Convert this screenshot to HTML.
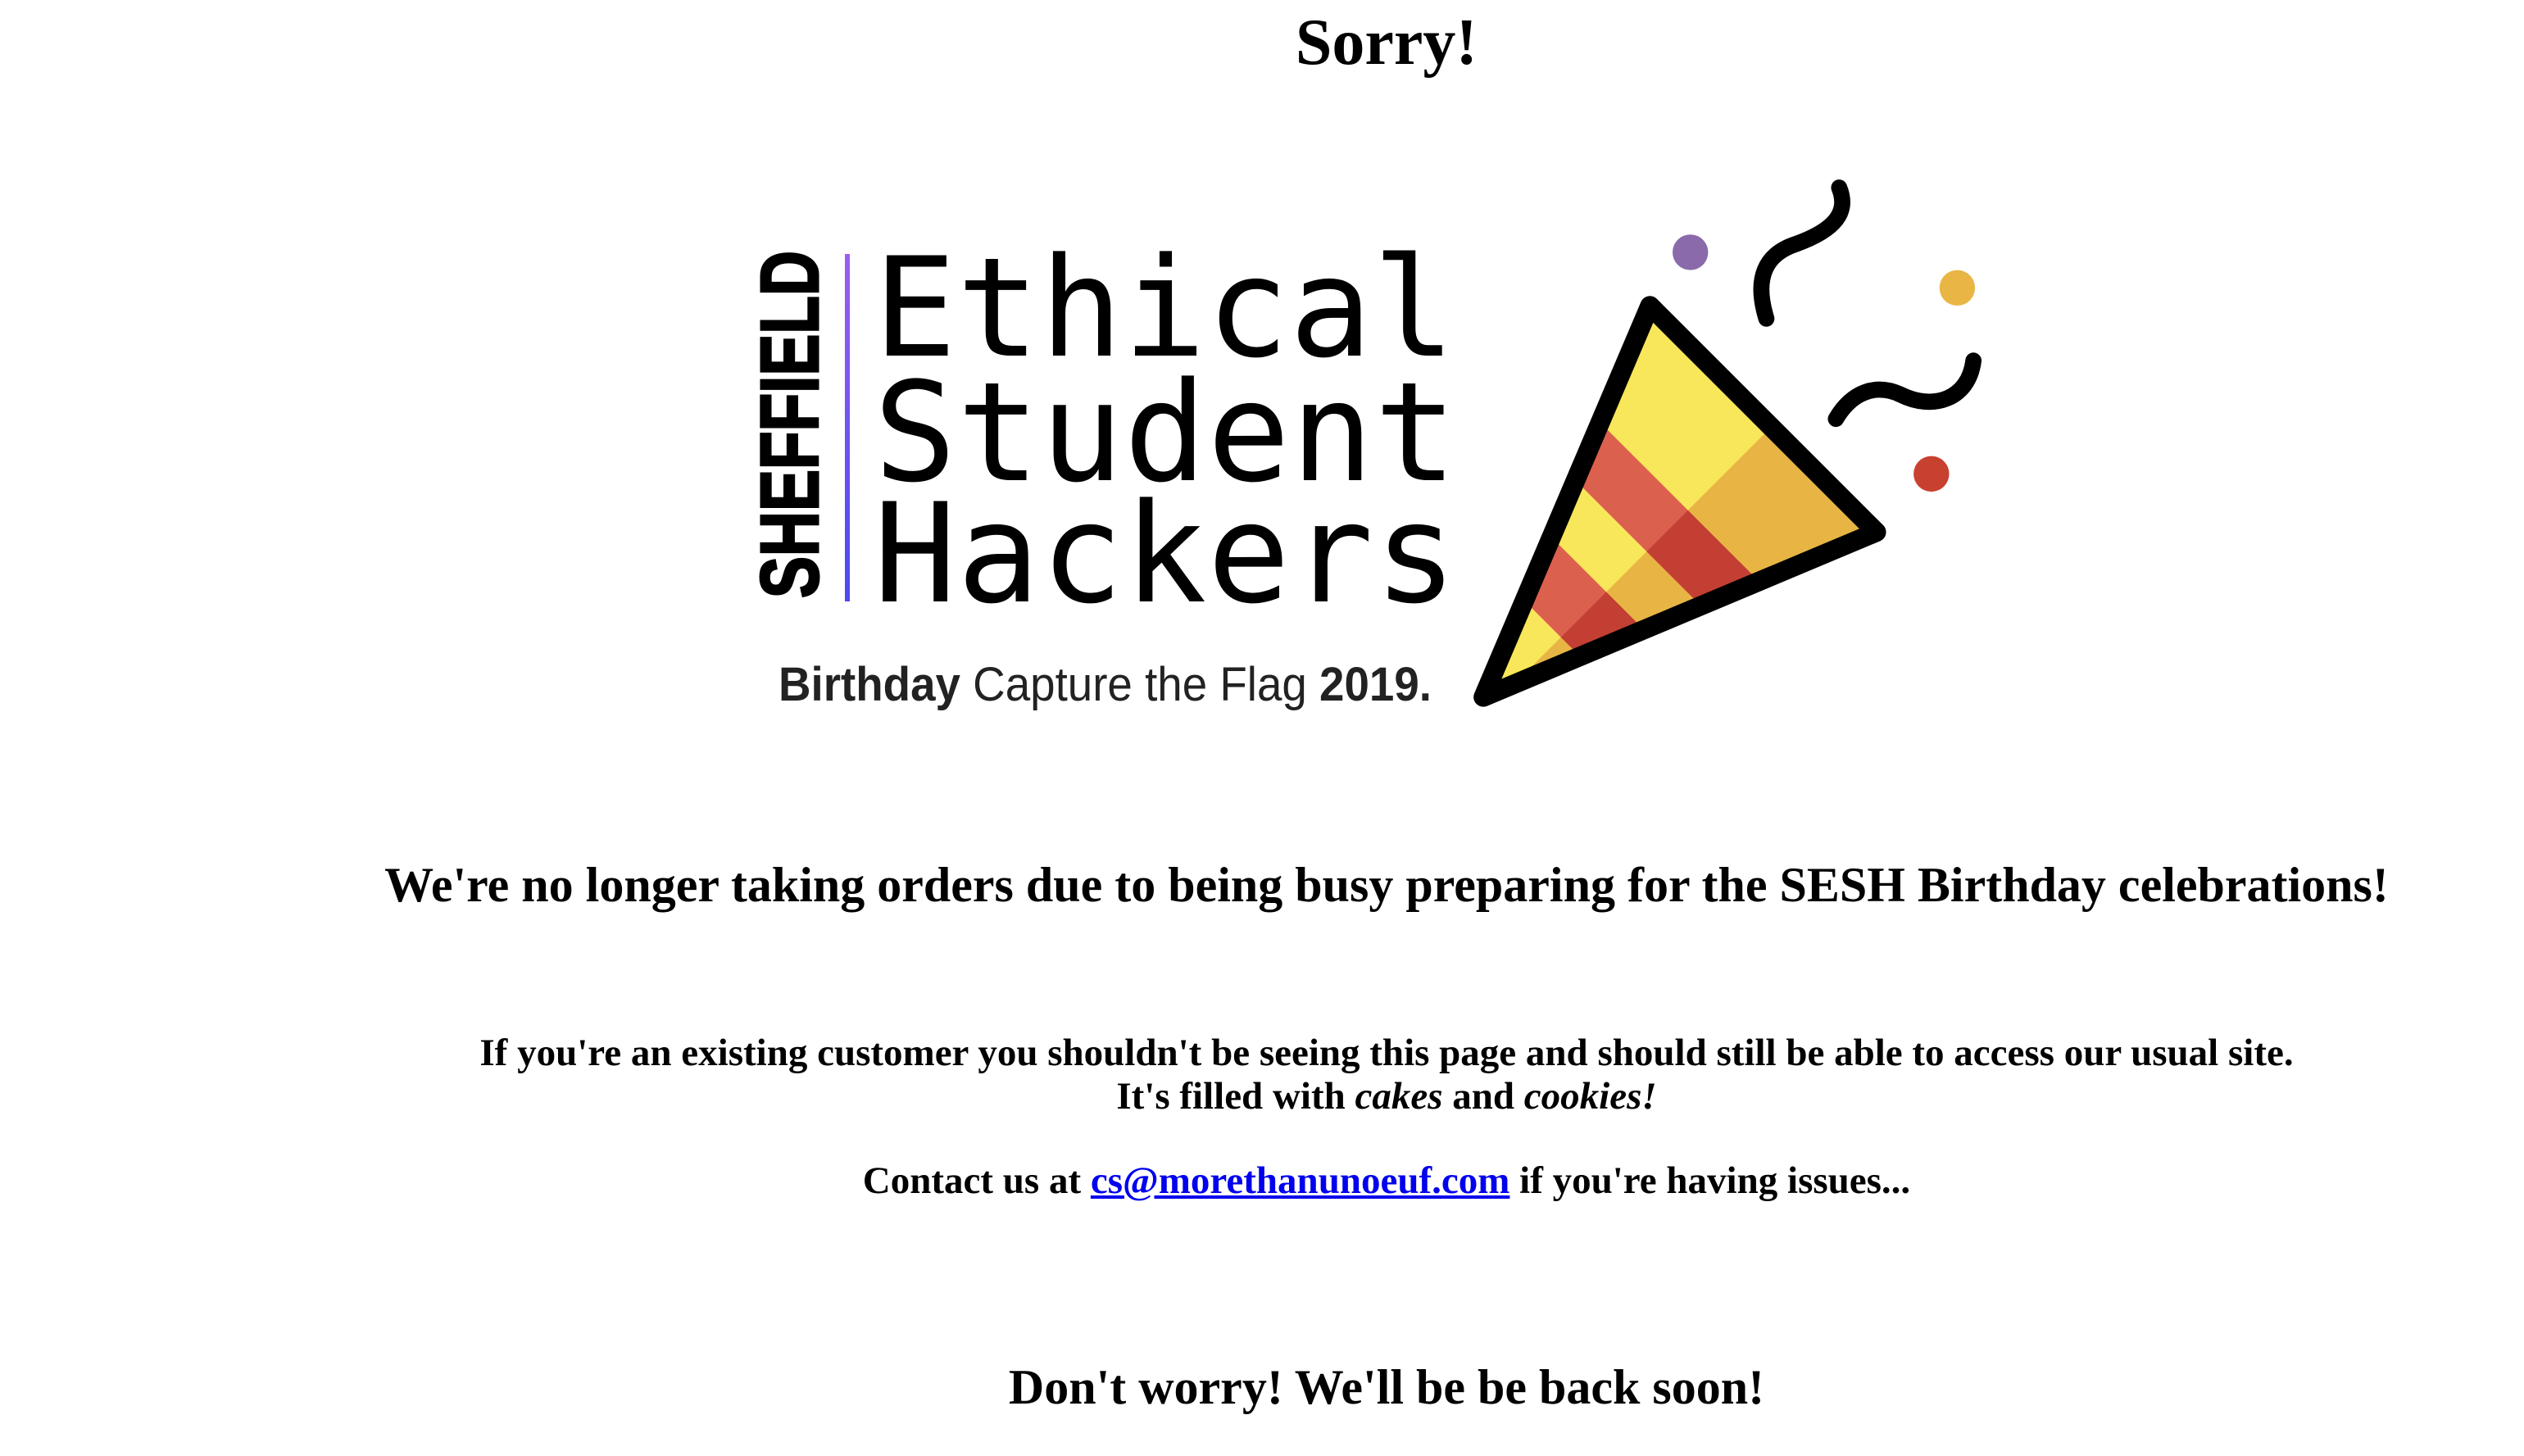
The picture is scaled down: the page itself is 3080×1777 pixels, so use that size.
<!DOCTYPE html>
<html><head><meta charset="utf-8"><style>
html,body{margin:0;padding:0;background:#fff;width:3080px;height:1777px;overflow:hidden;position:relative}
.t{position:absolute;left:0;width:3384px;text-align:center;font-family:"Liberation Serif",serif;font-weight:bold;line-height:1;color:#000;white-space:nowrap}
a{color:#0000ee;text-decoration:underline}
svg{position:absolute;left:0;top:0}
</style></head><body>
<div class="t" style="top:12px;font-size:80px">Sorry!</div>
<svg width="3080" height="1000" viewBox="0 0 3080 1000">
  <text x="998" y="730" transform="rotate(-90 998 730)" font-family="Liberation Sans, sans-serif" font-weight="bold" font-size="100" stroke="#000" stroke-width="3" textLength="424" lengthAdjust="spacingAndGlyphs">SHEFFIELD</text>
  <defs><linearGradient id="pg" x1="0" y1="0" x2="0" y2="1"><stop offset="0" stop-color="#9a5ef0"/><stop offset="1" stop-color="#4a4af0"/></linearGradient></defs>
  <rect x="1031" y="310" width="6" height="424" fill="url(#pg)"/>
  <g font-family="DejaVu Sans Mono, monospace" font-size="168" fill="#000">
    <text x="1066" y="434" textLength="710">Ethical</text>
    <text x="1066" y="586" textLength="712">Student</text>
    <text x="1066" y="734" textLength="712">Hackers</text>
  </g>
  <text x="950" y="855" font-family="Liberation Sans Narrow, Liberation Sans, sans-serif" font-size="58" fill="#222" textLength="797" lengthAdjust="spacingAndGlyphs"><tspan font-weight="bold">Birthday</tspan> Capture the Flag <tspan font-weight="bold">2019.</tspan></text>
  <g transform="translate(-10,-2) scale(1.974)">
    <clipPath id="cone"><polygon points="1025,190 1165,330 922,432"/></clipPath>
    <clipPath id="or"><polygon points="1265,100 865,500 1300,500 1300,100"/></clipPath>
    <g clip-path="url(#cone)">
      <polygon points="1025,190 1165,330 922,432" fill="#f8e75a"/>
      <polygon points="1265,100 865,500 1300,500 1300,100" fill="#e8b545"/>
      <g fill="#dc604e">
        <polygon points="832,100 1232,500 1181,500 781,100"/>
        <polygon points="731,100 1131,500 1075,500 675,100"/>
      </g>
      <g fill="#c33f33" clip-path="url(#or)">
        <polygon points="832,100 1232,500 1181,500 781,100"/>
        <polygon points="731,100 1131,500 1075,500 675,100"/>
      </g>
    </g>
    <polygon points="1025,190 1165,330 922,432" fill="none" stroke="#000" stroke-width="12" stroke-linejoin="round"/>
    <circle cx="1050" cy="157" r="11" fill="#8a6aaa"/>
    <circle cx="1215" cy="179" r="11" fill="#e9b646"/>
    <circle cx="1199" cy="294" r="11" fill="#c8402f"/>
    <path d="M1097,198 C1089,172 1097,158 1115,152 C1140,143 1148,132 1142,117" fill="none" stroke="#000" stroke-width="10" stroke-linecap="round"/>
    <path d="M1140,260 C1150,243 1165,238 1180,245 C1200,255 1222,248 1225,224" fill="none" stroke="#000" stroke-width="10" stroke-linecap="round"/>
  </g>
</svg>
<div class="t" style="top:1050px;font-size:60px">We're no longer taking orders due to being busy preparing for the SESH Birthday celebrations!</div>
<div class="t" style="top:1262px;font-size:47px">If you're an existing customer you shouldn't be seeing this page and should still be able to access our usual site.</div>
<div class="t" style="top:1315px;font-size:47px">It's filled with <i>cakes</i> and <i>cookies!</i></div>
<div class="t" style="top:1418px;font-size:47px">Contact us at <a>cs@morethanunoeuf.com</a> if you're having issues...</div>
<div class="t" style="top:1663px;font-size:60px">Don't worry! We'll be be back soon!</div>
</body></html>
